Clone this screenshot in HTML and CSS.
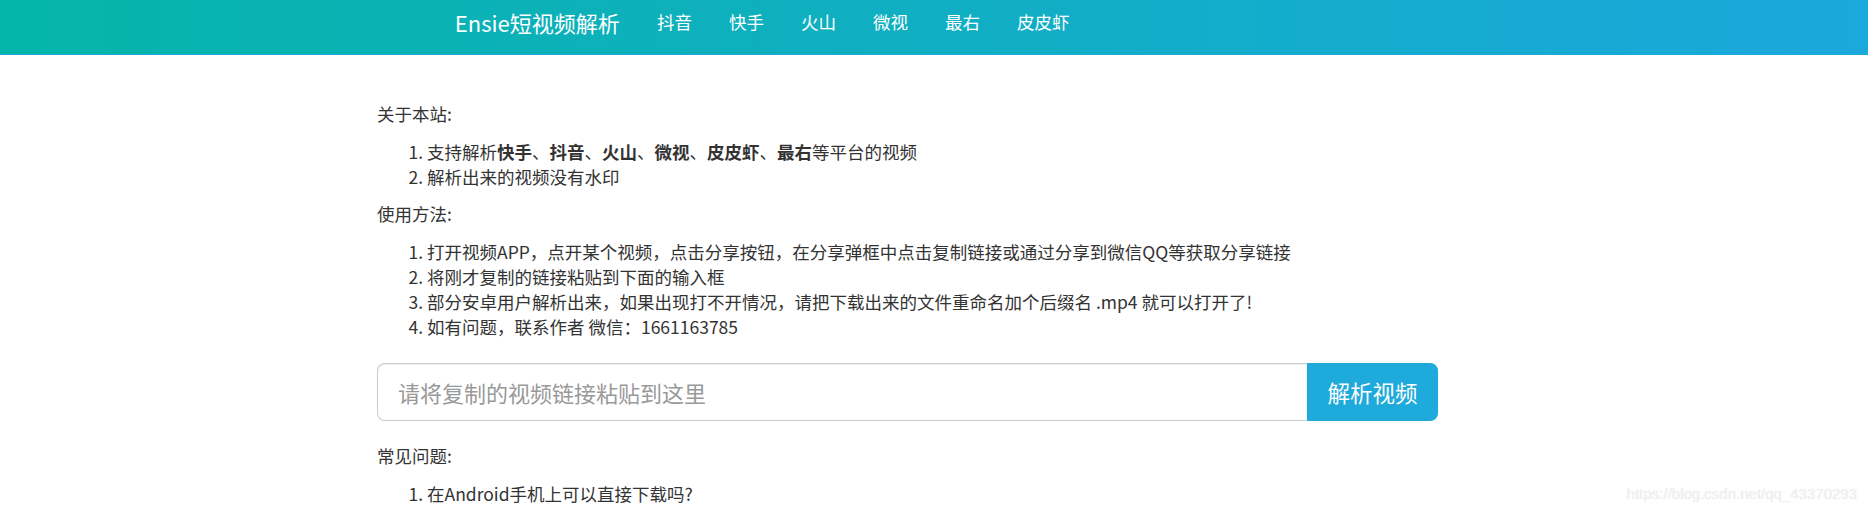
FILE: index.html
```html
<!DOCTYPE html>
<html lang="zh-CN">
<head>
<meta charset="utf-8">
<title>Ensie短视频解析</title>
<link rel="stylesheet" href="styles.css">
</head>
<body>
<nav class="navbar">
  <div class="nav-inner">
    <a class="brand">Ensie短视频解析</a>
    <ul class="nav-list">
      <li><a>抖音</a></li>
      <li><a>快手</a></li>
      <li><a>火山</a></li>
      <li><a>微视</a></li>
      <li><a>最右</a></li>
      <li><a>皮皮虾</a></li>
    </ul>
  </div>
</nav>
<main class="content">
  <p>关于本站:</p>
  <ol>
    <li>支持解析<b>快手</b>、<b>抖音</b>、<b>火山</b>、<b>微视</b>、<b>皮皮虾</b>、<b>最右</b>等平台的视频</li>
    <li>解析出来的视频没有水印</li>
  </ol>
  <p>使用方法:</p>
  <ol>
    <li>打开视频APP，点开某个视频，点击分享按钮，在分享弹框中点击复制链接或通过分享到微信QQ等获取分享链接</li>
    <li>将刚才复制的链接粘贴到下面的输入框</li>
    <li>部分安卓用户解析出来，如果出现打不开情况，请把下载出来的文件重命名加个后缀名 .mp4 就可以打开了!</li>
    <li>如有问题，联系作者 微信：1661163785</li>
  </ol>
  <form class="input-group">
    <input class="url-input" type="text" placeholder="请将复制的视频链接粘贴到这里">
    <button class="parse-btn" type="button">解析视频</button>
  </form>
  <p>常见问题:</p>
  <ol>
    <li>在Android手机上可以直接下载吗?</li>
  </ol>
</main>
<div class="watermark">https://blog.csdn.net/qq_43370293</div>
</body>
</html>
```
FILE: styles.css
```css
html, body {
  margin: 0;
  padding: 0;
}
body {
  font-family: "Noto Sans CJK SC", "Liberation Sans", sans-serif;
  font-size: 17.5px;
  line-height: 25px;
  color: #333;
  background: #fff;
  height: 515px;
  overflow: hidden;
  position: relative;
}
.navbar {
  height: 54px;
  background: linear-gradient(to right, #05b5a9, #1ba8dc);
  border-bottom: 1px solid #1ea8d6;
}
.nav-inner {
  display: flex;
  align-items: center;
  height: 43px;
  margin-left: 436px;
}
.brand {
  color: #fff;
  font-size: 22px;
  line-height: 30px;
  padding: 0 18.75px;
}
.nav-list {
  display: flex;
  list-style: none;
  margin: 0;
  padding: 0;
}
.nav-list a {
  display: block;
  color: #fff;
  font-size: 17.5px;
  line-height: 25px;
  padding: 0 18.5px;
}
.content {
  width: 1061px;
  margin-left: 377px;
  padding-top: 46px;
}
.content p {
  margin: 0 0 12.5px;
}
.content ol {
  margin: 0 0 12.5px;
  padding-left: 50px;
}
.content b {
  font-weight: 700;
}
.input-group {
  display: flex;
  height: 58px;
  margin: 24px 0 22.5px;
}
.url-input {
  flex: 1;
  min-width: 0;
  box-sizing: border-box;
  height: 58px;
  border: 1px solid #ccc;
  border-right: none;
  border-radius: 7.5px 0 0 7.5px;
  padding: 0 20px;
  font-family: "Noto Sans CJK SC", "Liberation Sans", sans-serif;
  font-size: 22px;
  color: #555;
  box-shadow: inset 0 1px 1px rgba(0, 0, 0, .075);
  outline: none;
}
.url-input::placeholder {
  color: #999;
}
.parse-btn {
  box-sizing: border-box;
  width: 131px;
  height: 58px;
  border: 1px solid #1ca8d8;
  border-radius: 0 7.5px 7.5px 0;
  background: #1eaadb;
  color: #fff;
  font-family: "Noto Sans CJK SC", "Liberation Sans", sans-serif;
  font-size: 22.5px;
  padding: 0;
}
.watermark {
  position: absolute;
  right: 11px;
  bottom: 9px;
  font-family: "Liberation Sans", sans-serif;
  font-size: 15px;
  color: #f2f2f2;
  text-shadow: 0 0 1px #e2e2e2;
}
```
